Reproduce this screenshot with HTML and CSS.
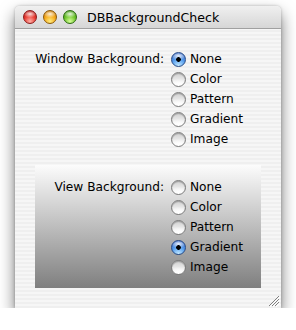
FILE: index.html
```html
<!DOCTYPE html>
<html>
<head>
<meta charset="utf-8">
<link rel="stylesheet" href="styles.css">
</head>
<body>
<div class="window">
  <div class="titlebar">
    <div class="lights">
      <span class="light red"></span>
      <span class="light yellow"></span>
      <span class="light green"></span>
    </div>
    <span class="title">DBBackgroundCheck</span>
  </div>
  <div class="content">
    <div class="group">
      <div class="label">Window Background:</div>
      <div class="options">
        <div class="option"><span class="radio on"></span>None</div>
        <div class="option"><span class="radio"></span>Color</div>
        <div class="option"><span class="radio"></span>Pattern</div>
        <div class="option"><span class="radio"></span>Gradient</div>
        <div class="option"><span class="radio"></span>Image</div>
      </div>
    </div>
    <div class="gradbox">
      <div class="group">
        <div class="label">View Background:</div>
        <div class="options">
          <div class="option"><span class="radio"></span>None</div>
          <div class="option"><span class="radio"></span>Color</div>
          <div class="option"><span class="radio"></span>Pattern</div>
          <div class="option"><span class="radio on"></span>Gradient</div>
          <div class="option"><span class="radio"></span>Image</div>
        </div>
      </div>
    </div>
  </div>
  <svg class="grip" width="12" height="12" viewBox="0 0 12 12">
    <path d="M11 1 L1 11 M11 4 L4 11 M11 7 L7 11" stroke="#808080" stroke-width="1" fill="none"/>
    <path d="M12 2 L2 12 M12 5 L5 12 M12 8 L8 12" stroke="#ffffff" stroke-width="1" fill="none"/>
  </svg>
</div>
</body>
</html>
```
FILE: styles.css
```css
html, body {
  margin: 0;
  padding: 0;
  background: #ffffff;
}
body {
  padding: 6px 0 0 15px;
  font-family: "DejaVu Sans", "Liberation Sans", sans-serif;
  font-size: 12.2px;
  color: #000;
}
.window {
  position: relative;
  width: 266px;
  border-radius: 5px 5px 0 0;
  box-shadow: 0 8px 16px rgba(0, 0, 0, 0.55), 0 0 3px rgba(0,0,0,0.25);
  background: repeating-linear-gradient(#efefef 0 2px, #f6f6f6 2px 4px);
}
.titlebar {
  height: 22px;
  border-bottom: 1px solid #a0a0a0;
  border-radius: 5px 5px 0 0;
  background: linear-gradient(#f0f0f0, #d6d6d6);
  display: flex;
  align-items: center;
  padding-left: 8px;
}
.lights {
  display: flex;
  gap: 6px;
}
.light {
  width: 14px;
  height: 14px;
  border-radius: 50%;
  box-sizing: border-box;
}
.red {
  border: 1px solid #8a1a1a;
  background: radial-gradient(ellipse 60% 35% at 50% 25%, rgba(255,255,255,0.85), rgba(255,255,255,0) 90%),
              radial-gradient(circle at 50% 85%, #ffb0a8 0, #e83a30 50%, #a81010 100%);
}
.yellow {
  border: 1px solid #8c5a08;
  background: radial-gradient(ellipse 60% 35% at 50% 25%, rgba(255,255,255,0.85), rgba(255,255,255,0) 90%),
              radial-gradient(circle at 50% 85%, #ffec80 0, #f5a818 50%, #b86a00 100%);
}
.green {
  border: 1px solid #2c6a10;
  background: radial-gradient(ellipse 60% 35% at 50% 25%, rgba(255,255,255,0.85), rgba(255,255,255,0) 90%),
              radial-gradient(circle at 50% 85%, #d8ff9a 0, #6cc42a 50%, #2e8a08 100%);
}
.title {
  margin-left: 10px;
  font-size: 12.6px;
  color: #000;
}
.content {
  padding: 20px 20px 20px 20px;
}
.group {
  display: grid;
  grid-template-columns: 129px auto;
  column-gap: 7px;
}
.label {
  text-align: right;
  line-height: 20px;
  white-space: nowrap;
}
.option {
  display: flex;
  align-items: center;
  height: 20px;
  gap: 4px;
}
.gradbox {
  margin-top: 16px;
  padding: 12px 0 11px 0;
  background: linear-gradient(#fcfcfc, #7f7f7f);
}
.radio {
  width: 15px;
  height: 15px;
  box-sizing: border-box;
  border-radius: 50%;
  border: 1px solid #7a7a7a;
  background: radial-gradient(ellipse 70% 40% at 50% 85%, #ffffff, rgba(255,255,255,0) 100%),
              linear-gradient(#cfcfcf, #eeeeee 60%, #ffffff);
  box-shadow: inset 0 1px 1px rgba(0,0,0,0.25);
}
.radio.on {
  border: 1px solid #264a86;
  background: radial-gradient(circle at 50% 50%, #000 0 2px, rgba(0,0,0,0) 2.6px),
              radial-gradient(ellipse 65% 35% at 50% 22%, rgba(255,255,255,0.9), rgba(255,255,255,0) 95%),
              radial-gradient(circle at 50% 100%, #c8ecff 0, #5ea4f0 45%, #2358c0 90%);
  box-shadow: none;
}
.grip {
  position: absolute;
  right: 1px;
  bottom: 1px;
}
```
